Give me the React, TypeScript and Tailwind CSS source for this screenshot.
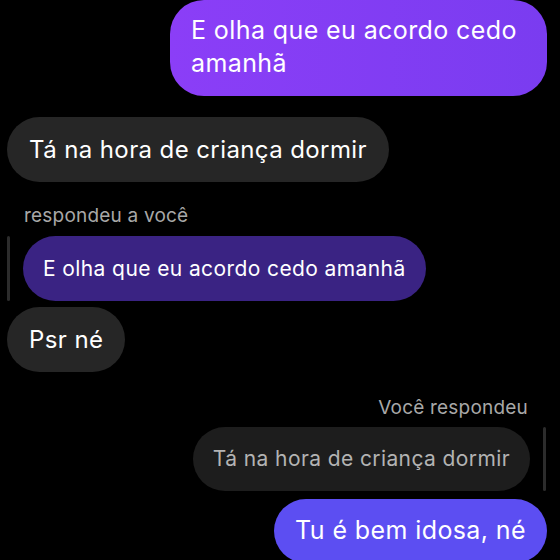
export default function App() {
  return (
    <div
      className="w-[560px] h-[560px] overflow-hidden bg-black flex flex-col text-white tracking-[0.4px]"
      style={{ fontFamily: "Inter, Roboto, sans-serif" }}
    >
      {/* my message */}
      <div className="flex justify-end pr-[13px]">
        <div className="w-[377px] h-[96px] rounded-[34px] bg-gradient-to-r from-[#8b3ef7] to-[#7a3cf0] pl-[21px] pr-4 pt-[14px] text-[25px] leading-[33px]">
          E olha que eu acordo cedo amanhã
        </div>
      </div>

      {/* their message */}
      <div className="flex pl-[7px] mt-[21px]">
        <div className="h-[65px] rounded-full bg-[#262626] px-[22px] flex items-center text-[24px]">
          Tá na hora de criança dormir
        </div>
      </div>

      <div className="pl-[24px] mt-[22px] text-[19px] leading-[24px] tracking-[0.2px] text-[#a8a8a8]">respondeu a você</div>

      <div className="flex items-stretch pl-[7px] mt-[8px]">
        <div className="w-[3px] rounded-full bg-[#2c2c2c] mr-[13px]" />
        <div className="h-[65px] rounded-full bg-[#3a2383] px-5 flex items-center text-[21px]">
          E olha que eu acordo cedo amanhã
        </div>
      </div>

      <div className="flex pl-[7px] mt-[6px]">
        <div className="h-[65px] rounded-full bg-[#262626] px-[22px] flex items-center text-[24px]">
          Psr né
        </div>
      </div>

      <div className="flex justify-end pr-[32px] mt-[24px] text-[19px] leading-[24px] tracking-[0.2px] text-[#a8a8a8]">
        Você respondeu
      </div>

      <div className="flex items-stretch justify-end pr-[14px] mt-[7px]">
        <div className="h-[64px] rounded-full bg-[#1d1d1d] px-5 flex items-center text-[21px] text-[#b3b3b3]">
          Tá na hora de criança dormir
        </div>
        <div className="w-[3px] rounded-full bg-[#2c2c2c] ml-[13px]" />
      </div>

      <div className="flex justify-end pr-[13px] mt-[8px]">
        <div className="h-[64px] rounded-full bg-[#5c4ef2] px-[21px] flex items-center text-[25px] shrink-0">
          Tu é bem idosa, né
        </div>
      </div>
    </div>
  );
}
